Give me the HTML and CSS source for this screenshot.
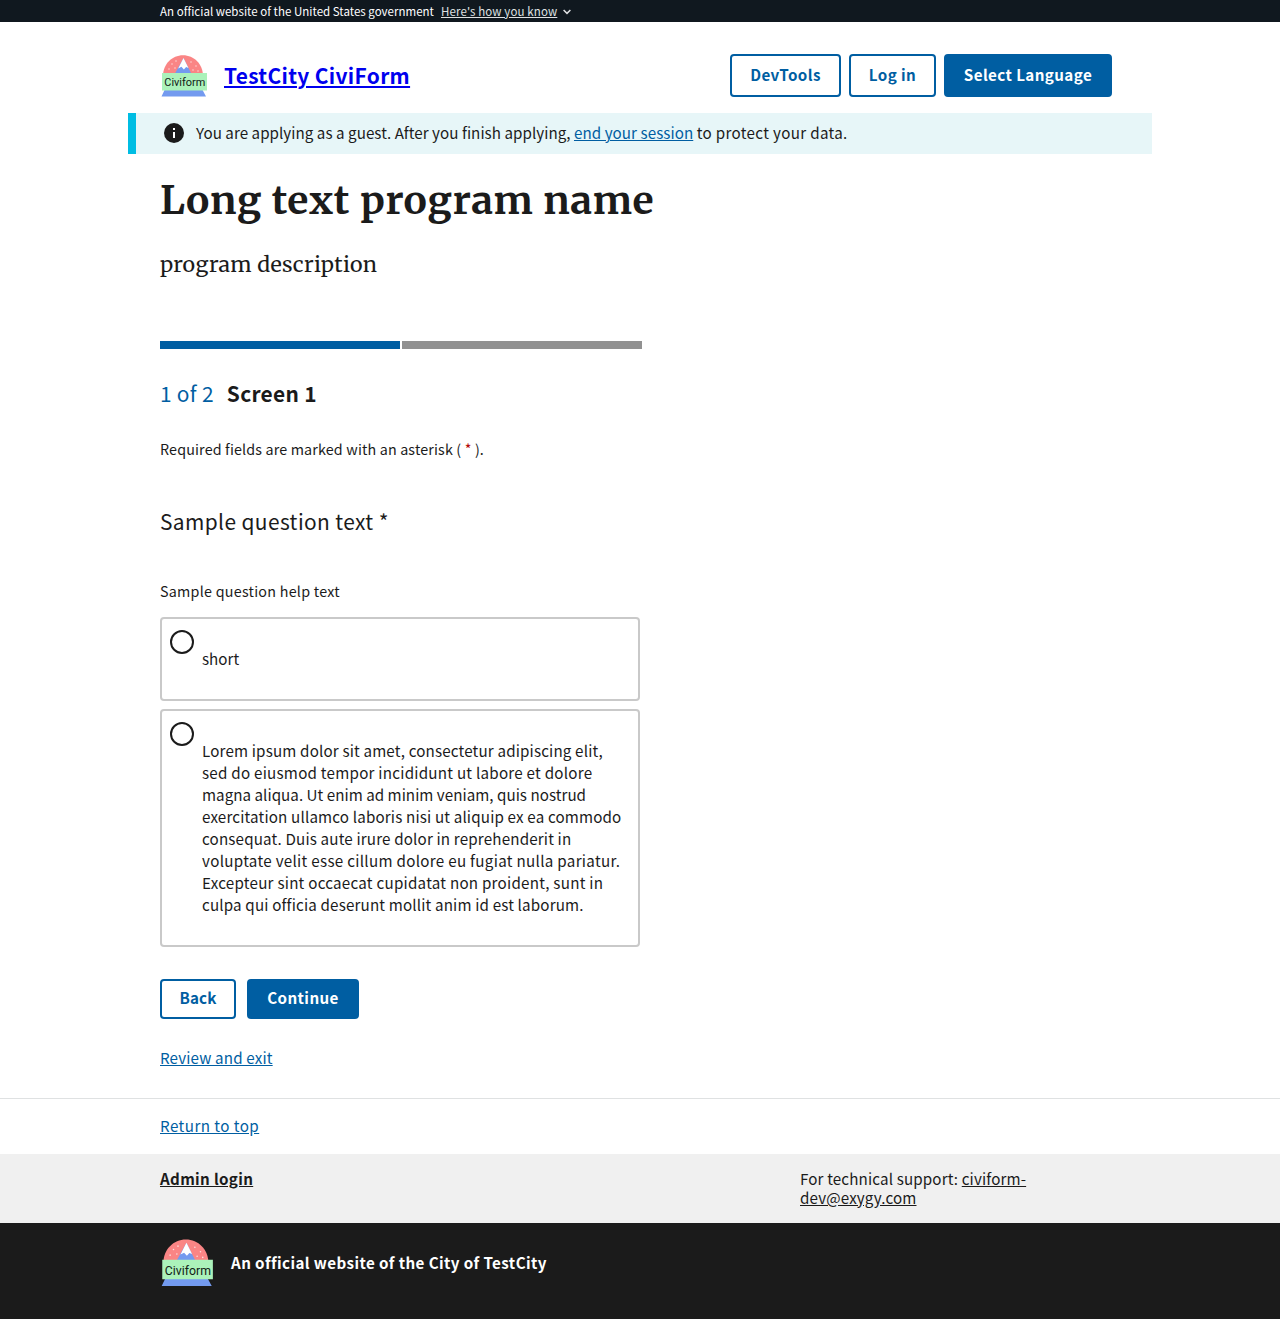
FILE: index.html
```html
<!DOCTYPE html>
<html lang="en">
<head>
<meta charset="utf-8">
<title>Long text program name</title>
<link rel="stylesheet" href="styles.css">
</head>
<body>
<div class="banner"><div class="container banner-row">
  <span class="banner-text">An official website of the United States government</span>
  <a class="banner-link" href="#">Here's how you know</a>
  <svg class="chevron" width="8" height="6" viewBox="0 0 8 6"><path d="m.6 1 3.400 3.400L7.400 1" fill="none" stroke="#dfe1e2" stroke-width="1.500"/></svg>
</div></div>
<header class="container header">
  <svg class="logo" width="48" height="44" viewBox="0 0 48 44">
    <path fill="#fa8585" d="M3 22C3 10 12 1.200 23 1.200S43 10 43 22z"/>
    <path fill="#739aef" d="M23.500 4 33 23H13zM5 35h37l4 7.500H1.500z"/>
    <path fill="#fff" d="m23.500 4 5 10-2.400-1-2.200 2.500-2.500-2.700-3.200 1.600z"/>
    <g fill="#fde0e0"><circle cx="12" cy="10" r=".7"/><circle cx="16" cy="7" r=".7"/><circle cx="9" cy="15" r=".7"/><circle cx="15" cy="14" r=".7"/><circle cx="31" cy="8" r=".7"/><circle cx="36" cy="12" r=".7"/><circle cx="33" cy="16" r=".7"/><circle cx="38" cy="17" r=".7"/></g>
    <path fill="#abf2ba" d="M2 19h45v17.500H2z"/>
    <text class="logo-text" x="4.300" y="32.300" textLength="41" lengthAdjust="spacingAndGlyphs">Civiform</text>
  </svg>
  <a class="site-name" href="#">TestCity CiviForm</a>
  <nav class="nav">
    <a class="btn outline devtools">DevTools</a><a class="btn outline login">Log in</a><a class="btn language">Select Language</a>
  </nav>
</header>
<div class="alert">
  <svg width="20" height="20" viewBox="0 0 20 20"><circle cx="10" cy="10" r="10" fill="#1b1b1b"/><path fill="#fff" d="M9 5h2v2H9zM9 9h2v6H9z"/></svg>
  <p class="alert-text"><span class="guest">You are applying as a guest. After you finish applying,</span> <a class="session" href="#">end your session</a> <span class="protect">to protect your data.</span></p>
</div>
<main class="container main">
  <h1 class="title">Long text program name</h1>
  <p class="description">program description</p>
  <div class="steps"><div class="step current"></div><div class="step"></div></div>
  <h2 class="step-heading"><span class="count">1 of 2</span><span class="screen">Screen 1</span></h2>
  <p class="required">Required fields are marked with an asterisk ( <span class="star">*</span> ).</p>
  <p class="question">Sample question text *</p>
  <p class="help">Sample question help text</p>
  <div class="options">
    <label class="option"><span class="radio"></span><span class="option-text short">short</span></label>
    <label class="option"><span class="radio"></span><span class="option-text"><span class="line normal">Lorem ipsum dolor sit amet, consectetur adipiscing elit,</span><span class="line wide">sed do eiusmod tempor incididunt ut labore et dolore</span><span class="line tight">magna aliqua. Ut enim ad minim veniam, quis nostrud</span><span class="line normal">exercitation ullamco laboris nisi ut aliquip ex ea commodo</span><span class="line normal">consequat. Duis aute irure dolor in reprehenderit in</span><span class="line widest">voluptate velit esse cillum dolore eu fugiat nulla pariatur.</span><span class="line wide">Excepteur sint occaecat cupidatat non proident, sunt in</span><span class="line normal">culpa qui officia deserunt mollit anim id est laborum.</span></span></label>
  </div>
  <div class="actions"><a class="btn outline back">Back</a><a class="btn continue">Continue</a></div>
  <a class="review" href="#">Review and exit</a>
</main>
<footer>
  <div class="return"><div class="container"><a class="top" href="#">Return to top</a></div></div>
  <div class="support"><div class="container support-row">
    <a class="admin" href="#">Admin login</a>
    <p class="contact">For technical support: <a href="#">civiform-<br>dev@exygy.com</a></p>
  </div></div>
  <div class="identifier"><div class="container identifier-row">
    <svg class="footer-logo" width="54" height="50" viewBox="0 0 48 44">
      <path fill="#fa8585" d="M3 22C3 10 12 1.200 23 1.200S43 10 43 22z"/>
      <path fill="#739aef" d="M23.500 4 33 23H13zM5 35h37l4 7.500H1.500z"/>
      <path fill="#fff" d="m23.500 4 5 10-2.400-1-2.200 2.500-2.500-2.700-3.200 1.600z"/>
      <g fill="#fde0e0"><circle cx="12" cy="10" r=".7"/><circle cx="16" cy="7" r=".7"/><circle cx="9" cy="15" r=".7"/><circle cx="15" cy="14" r=".7"/><circle cx="31" cy="8" r=".7"/><circle cx="36" cy="12" r=".7"/><circle cx="33" cy="16" r=".7"/><circle cx="38" cy="17" r=".7"/></g>
      <path fill="#abf2ba" d="M2 19h45v17.500H2z"/>
      <text class="logo-text" x="4.300" y="32.300" textLength="41" lengthAdjust="spacingAndGlyphs">Civiform</text>
    </svg>
    <span class="official">An official website of the City of TestCity</span>
  </div></div>
</footer>
</body>
</html>
```
FILE: styles.css
```css
* { box-sizing: border-box; }
body { margin: 0; background: #fff; color: #1b1b1b; font: 15.180px/22px "Source Sans Pro", "Noto Sans CJK SC", sans-serif; }
p, h1, h2 { margin: 0; white-space: nowrap; }
a { color: #005ea2; text-underline-offset: 1px; }
svg { display: block; flex: none; }
.logo-text { font: 400 11.200px Roboto, sans-serif; fill: #122017; letter-spacing: 0; }
.container { width: 1024px; margin: 0 auto; padding: 0 32px; }
.banner { height: 22px; background: #10181f; color: #fff; font-size: 11.500px; line-height: 22px; }
.banner-row { display: flex; align-items: center; white-space: nowrap; }
.banner-text { width: 281px; letter-spacing: .02px; }
.banner-link { width: 122px; color: #dfe1e2; letter-spacing: .12px; }
.chevron { margin-top: 2px; }
.header { height: 91px; padding-top: 32px; display: flex; }
.site-name { margin: 7px 0 0 16px; color: #0000ee; font-size: 20.900px; line-height: 28px; font-weight: 700; letter-spacing: .34px; text-underline-offset: 2px; }
.nav { display: flex; gap: 8px; margin-left: auto; margin-right: 8px; }
.btn { height: 43px; border: 2px solid #005ea2; border-radius: 4px; background: #005ea2; color: #fff; font-weight: 700; line-height: 36px; letter-spacing: .4px; text-align: center; white-space: nowrap; }
.outline { background: #fff; color: #005ea2; }
.devtools { width: 111px; }
.login { width: 87px; }
.language { width: 168px; }
.alert { width: 1024px; height: 41px; margin: 0 auto; border-left: 8px solid #00bde3; background: #e7f6f8; padding: 0 0 1px 28px; display: flex; align-items: center; gap: 12px; }
.alert-text { padding-bottom: 2px; }
.guest { letter-spacing: .04px; }
.session { letter-spacing: .06px; }
.protect { letter-spacing: .33px; }
.main { padding-top: 21px; height: 944px; }
.title { font: 700 39.040px/52px Merriweather, serif; letter-spacing: .63px; }
.description { margin-top: 23px; font: 21.440px/30px Merriweather, serif; letter-spacing: .25px; }
.steps { display: flex; gap: 2px; margin-top: 61px; }
.step { width: 240px; height: 8px; background: #919191; }
.current { background: #005ea2; }
.step-heading { margin-top: 30px; display: flex; gap: 13px; font-size: 20.900px; line-height: 28px; letter-spacing: .3px; }
.count { color: #005ea2; font-weight: 400; }
.required { margin-top: 31px; font-size: 14.320px; letter-spacing: .15px; }
.star { color: #b50909; }
.question { margin-top: 47px; font-size: 20.900px; line-height: 28px; letter-spacing: .4px; }
.help { margin-top: 45px; font-size: 14.320px; letter-spacing: .25px; }
.options { display: grid; gap: 8px; margin-top: 15px; width: 480px; }
.option { display: flex; gap: 8px; padding: 11px 8px 30px; border: 2px solid #c9c9c9; border-radius: 4px; }
.radio { width: 24px; height: 24px; flex: none; border: 2px solid #1b1b1b; border-radius: 50%; }
.option-text { padding-top: 17px; white-space: nowrap; }
.line { display: block; }
.tight { letter-spacing: .03px; }
.normal { letter-spacing: .16px; }
.wide { letter-spacing: .24px; }
.widest { letter-spacing: .3px; }
.actions { display: flex; gap: 11px; margin-top: 32px; }
.actions .btn { height: 40px; line-height: 33px; }
.actions .back { width: 76px; letter-spacing: .1px; }
.continue { width: 112px; }
.review { display: inline-block; margin-top: 27px; letter-spacing: .15px; }
.return { height: 56px; border-top: 1px solid #dfe1e2; padding-top: 15px; }
.top { letter-spacing: .45px; }
.support { height: 69px; padding-top: 15px; background: #f0f0f0; line-height: 19px; }
.support-row { display: grid; grid-template-columns: 640px 1fr; }
.support a { color: #1b1b1b; }
.admin { font-weight: 700; letter-spacing: .33px; }
.contact { letter-spacing: .14px; }
.identifier { height: 96px; padding-top: 15px; background: #1b1b1b; color: #fff; font-weight: 700; }
.identifier-row { display: flex; gap: 17px; }
.official { margin-top: 13px; letter-spacing: .4px; }
```
